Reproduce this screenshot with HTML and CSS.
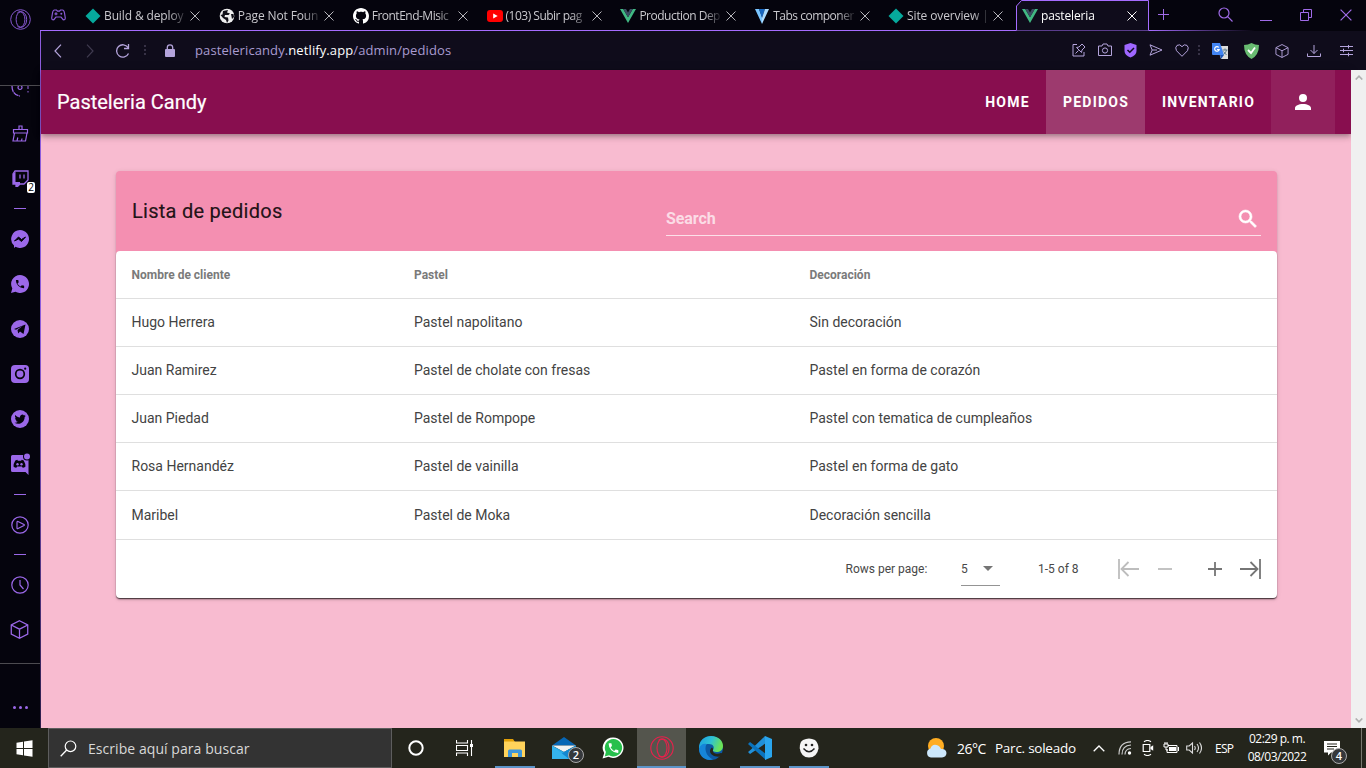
FILE: index.html
```html
<!DOCTYPE html>
<html lang="es">
<head>
<meta charset="utf-8">
<title>pasteleria</title>
<link rel="stylesheet" href="styles.css">
</head>
<body>
<svg class="defs" width="0" height="0">
  <defs>
    <symbol id="close" viewBox="0 0 10 10"><path d="M.5.5l9 9M9.500.500l-9 9" fill="none" stroke="currentColor"/></symbol>
    <symbol id="netlify" viewBox="0 0 16 16"><path d="M8 .5L15.500 8 8 15.500.5 8z" fill="#06a99c"/></symbol>
    <symbol id="vue" viewBox="0 0 16 14"><path d="M0 0h3.200L8 8.200 12.800 0H16L8 14z" fill="#41b883"/><path d="M3.200 0H6l2 3.400L10 0h2.800L8 8.200z" fill="#3b4d63"/></symbol>
    <symbol id="opera" viewBox="0 0 24 24"><g fill="none" stroke="currentColor" stroke-width="1.100"><circle cx="12" cy="12" r="11.200"/><ellipse cx="12" cy="12" rx="5" ry="8.800"/><path d="M8.500 4.300C12 1.200 19 3.500 19 12s-7 10.800-10.500 7.700"/></g></symbol>
    <symbol id="cube" viewBox="0 0 18 18"><path d="M9 .7l7.800 4v8.600L9 17.300l-7.800-4V4.700zM1.200 4.700L9 8.700l7.800-4M9 8.700v8.600" fill="none" stroke="currentColor" stroke-width="1.200"/></symbol>
    <symbol id="phone" viewBox="0 0 24 24"><path fill="currentColor" d="M6.620 10.790c1.440 2.830 3.760 5.150 6.590 6.590l2.200-2.200c.28-.28.67-.36 1.020-.25 1.120.37 2.320.57 3.570.57a1 1 0 0 1 1 1V20a1 1 0 0 1-1 1A17 17 0 0 1 3 4a1 1 0 0 1 1-1h3.500a1 1 0 0 1 1 1c0 1.250.2 2.450.57 3.570.11.35.03.74-.25 1.020z"/></symbol>
  </defs>
</svg>

<div class="desktop">
  <div class="browser">
    <aside class="sidebar">
      <div class="side-top"><svg width="21" height="21" class="opera-gx"><use href="#opera"/></svg></div>
      <div class="side-list">
        <div class="slot partial"><svg width="18" height="11" viewBox="0 0 18 11"><path d="M1 0c0 6 3 9.500 8 10" fill="none" stroke="currentColor" stroke-width="1.300" stroke-dasharray="6 .7"/><circle cx="9" cy="1.500" r="2" fill="none" stroke="currentColor" stroke-width="1.200"/><path d="M17 0v3M17 5v1.500" stroke="currentColor"/></svg></div>
        <div class="slot"><svg width="17" height="17" viewBox="0 0 17 17"><path d="M7 5V1h3v4M1.500 4.500h14V8h-14zM2.500 8L1 16h12.500L15 8M5 16l.8-3.500M9.500 16l.5-2.500" fill="none" stroke="currentColor" stroke-width="1.200"/></svg></div>
        <div class="slot badge-wrap"><svg width="17" height="17" viewBox="0 0 17 17"><path d="M3 1h13v9l-4 4H8l-2.500 2.500H4V14H1V4z" fill="none" stroke="currentColor" stroke-width="1.300"/><path d="M1 4l2.500-2.500V12H8v2l-3 2.500H4V14H1z" fill="currentColor"/><path d="M8 4.500v4M12 4.500v4" stroke="currentColor" stroke-width="1.300"/></svg><span class="side-badge">2</span></div>
        <div class="dash"></div>
        <div class="slot"><svg width="18" height="18" viewBox="0 0 18 18"><path d="M9 0a9 9 0 1 1-4.500 16.800L3 18v-2.500A9 9 0 0 1 9 0z" fill="currentColor"/><path d="M3.500 11l4-4 3 2.500 4-2.500-4 4.500-3-2.500z" fill="#05040d" stroke="#05040d"/></svg></div>
        <div class="slot"><svg width="18" height="18" viewBox="0 0 18 18"><path d="M9 0a9 9 0 1 1-4.500 16.800L0 18l1.300-4.500A9 9 0 0 1 9 0z" fill="currentColor"/><use href="#phone" x="3.500" y="3.500" width="11" height="11" color="#05040d"/></svg></div>
        <div class="slot"><svg width="18" height="18" viewBox="0 0 18 18"><circle cx="9" cy="9" r="9" fill="currentColor"/><path d="M3 9l11.500-4.500-2 9.500-3.500-2.500-1.800 2-.7-3.500 5-4-6.500 3.800z" fill="#05040d"/></svg></div>
        <div class="slot"><svg width="18" height="18" viewBox="0 0 18 18"><rect width="18" height="18" rx="4" fill="currentColor"/><circle cx="9" cy="9" r="4.300" fill="none" stroke="#05040d" stroke-width="1.700"/><circle cx="14.200" cy="3.700" r="1.100" fill="#05040d"/></svg></div>
        <div class="slot"><svg width="18" height="18" viewBox="0 0 18 18"><circle cx="9" cy="9" r="9" fill="currentColor"/><g transform="translate(3.500 3.600) scale(.47)"><path fill="#05040d" d="M23.953 4.570a10 10 0 01-2.825.775 4.958 4.958 0 002.163-2.723c-.951.555-2.005.959-3.127 1.184a4.920 4.920 0 00-8.384 4.482C7.690 8.095 4.067 6.130 1.640 3.162a4.822 4.822 0 00-.666 2.475c0 1.710.870 3.213 2.188 4.096a4.904 4.904 0 01-2.228-.616v.060a4.923 4.923 0 003.946 4.827 4.996 4.996 0 01-2.212.085 4.936 4.936 0 004.604 3.417 9.867 9.867 0 01-6.102 2.105c-.390 0-.779-.023-1.170-.067a13.995 13.995 0 007.557 2.209c9.053 0 13.998-7.496 13.998-13.985 0-.210 0-.420-.015-.630A9.935 9.935 0 0024 4.590z"/></g></svg></div>
        <div class="slot"><svg width="20" height="22" viewBox="0 0 20 22"><path d="M2.500 2h16v20l-3-3h-13a1.500 1.500 0 0 1-1.500-1.500v-14A1.500 1.500 0 0 1 2.500 2z" fill="currentColor"/><path d="M5.300 7.500l2-.7.6.9h3.200l.6-.9 2 .7q1.800 3 1.800 6-1.300 1.200-2.800 1.300l-.8-1.300H7.100l-.8 1.300q-1.500-.1-2.800-1.300 0-3 1.800-6z" fill="#05040d"/><circle cx="7.500" cy="11.300" r="1.200" fill="currentColor"/><circle cx="11.500" cy="11.300" r="1.200" fill="currentColor"/><circle cx="17" cy="3.500" r="4" fill="#05040d"/><circle cx="17" cy="3.500" r="3" fill="currentColor"/></svg></div>
        <div class="dash dash-tall"></div>
        <div class="slot shift"><svg width="18" height="18" viewBox="0 0 18 18"><circle cx="9" cy="9" r="8.200" fill="none" stroke="currentColor" stroke-width="1.200"/><path d="M6 6q0-.8 1-.5l6 3q.8.500 0 1l-6 3Q6 13 6 12z" fill="none" stroke="currentColor" stroke-width="1.200"/></svg></div>
        <div class="dash"></div>
        <div class="slot shift"><svg width="18" height="18" viewBox="0 0 18 18"><circle cx="9" cy="9" r="8.200" fill="none" stroke="currentColor" stroke-width="1.200"/><path d="M9 4v5l3.500 4" fill="none" stroke="currentColor" stroke-width="1.200"/></svg></div>
        <div class="slot shift"><svg width="19" height="19"><use href="#cube"/></svg></div>
      </div>
      <div class="side-more"><i></i><i></i><i></i></div>
    </aside>

    <div class="window">
      <div class="tabs">
        <div class="gamepad"><svg width="15" height="12" viewBox="0 0 15 12"><path d="M3.500 1h2l1 1.200h2L9.500 1h2q1.500 0 2 3l.8 5q0 1.800-1.300 1.800-1 0-1.700-1.200L10 8H5L3.700 9.600Q3 10.800 2 10.800.7 10.800.7 9l.8-5q.5-3 2-3zM3.500 4.800h3M5 3.300v3" fill="none" stroke="currentColor" stroke-width="1.200"/><circle cx="10.300" cy="4.800" r="1" fill="currentColor"/></svg></div>
        <div class="tab"><svg class="fav" width="16" height="16"><use href="#netlify"/></svg><span class="tab-text">Build &amp; deploy</span><svg class="x" width="10" height="10"><use href="#close"/></svg></div>
        <div class="tab"><svg class="fav" width="16" height="16" viewBox="0 0 16 16"><circle cx="8" cy="8" r="7.300" fill="#eee"/><path d="M4 3l5-1-1 2.500 3 1L9.500 7 6 7 5.500 9 9 9.500l.5 3L8 15l-1-3-3-2-2.500-3 2-.5zM12 6l2.500 0 .5 3-2 2z" fill="#111018"/></svg><span class="tab-text">Page Not Foun</span><svg class="x" width="10" height="10"><use href="#close"/></svg></div>
        <div class="tab"><svg class="fav" width="16" height="16" viewBox="0 0 16 16"><path fill="#fff" d="M8 0C3.580 0 0 3.580 0 8c0 3.540 2.290 6.530 5.470 7.590.4.070.55-.17.55-.38 0-.19-.01-.82-.01-1.490-2.010.37-2.530-.49-2.690-.94-.09-.23-.48-.94-.82-1.130-.28-.15-.68-.52-.01-.53.63-.01 1.080.58 1.230.82.72 1.210 1.870.87 2.330.66.070-.52.28-.87.51-1.070-1.780-.2-3.640-.89-3.640-3.950 0-.87.31-1.590.82-2.150-.08-.2-.36-1.020.08-2.120 0 0 .67-.21 2.200.82.64-.18 1.320-.27 2-.27s1.360.09 2 .27c1.530-1.040 2.200-.82 2.200-.82.44 1.100.16 1.920.08 2.120.51.56.82 1.270.82 2.150 0 3.070-1.870 3.750-3.650 3.950.29.25.54.73.54 1.480 0 1.070-.01 1.930-.01 2.200 0 .21.15.46.55.38A8.013 8.013 0 0016 8c0-4.420-3.580-8-8-8z"/></svg><span class="tab-text snug">FrontEnd-Misic</span><svg class="x" width="10" height="10"><use href="#close"/></svg></div>
        <div class="tab"><svg class="fav" width="16" height="16" viewBox="0 0 16 16"><rect y="2" width="16" height="12" rx="3" fill="#f00"/><path d="M6.200 5.500l4.500 2.500-4.500 2.500z" fill="#fff"/></svg><span class="tab-text snug">(103) Subir pag</span><svg class="x" width="10" height="10"><use href="#close"/></svg></div>
        <div class="tab"><svg class="fav" width="16" height="14"><use href="#vue"/></svg><span class="tab-text snug">Production Dep</span><svg class="x" width="10" height="10"><use href="#close"/></svg></div>
        <div class="tab"><svg class="fav" width="16" height="16" viewBox="0 0 16 16"><path d="M1 1h4l3 8v7z" fill="#7bc6ff"/><path d="M5 1h6L8 10z" fill="#1867c0"/><path d="M11 1h4L8 16V10z" fill="#aeddff"/></svg><span class="tab-text snug">Tabs componer</span><svg class="x" width="10" height="10"><use href="#close"/></svg></div>
        <div class="tab"><svg class="fav" width="16" height="16"><use href="#netlify"/></svg><span class="tab-text">Site overview |</span><svg class="x" width="10" height="10"><use href="#close"/></svg></div>
        <div class="tab active">
          <svg class="tab-shape" width="134" height="31" viewBox="0 0 134 31"><path d="M0 30.500V6L5.500.5H133v30z" fill="#0f0c1b"/><path d="M.5 30.500V6L5.500.5H132.500v30" fill="none" stroke="#a56cff"/></svg>
          <svg class="fav" width="16" height="14"><use href="#vue"/></svg><span class="tab-text">pasteleria</span><svg class="x" width="10" height="10"><use href="#close"/></svg>
        </div>
        <div class="caption">
          <svg width="12" height="12" viewBox="0 0 12 12"><path d="M5.500 0v11M0 5.500h11" stroke="currentColor"/></svg>
          <svg width="15" height="15" viewBox="0 0 15 15"><path d="M9.700 9.700L14.500 14.500M11 6a5 5 0 1 1-10 0 5 5 0 0 1 10 0z" fill="none" stroke="currentColor" stroke-width="1.200"/></svg>
          <svg width="12" height="12" viewBox="0 0 12 12"><path d="M0 11.500h12" stroke="currentColor"/></svg>
          <svg width="12" height="12" viewBox="0 0 12 12"><path d="M.5 3.500h8v8h-8zM3.500 3.500v-3h8v8h-3" fill="none" stroke="currentColor"/></svg>
          <svg width="12" height="12"><use href="#close"/></svg>
        </div>
      </div>

      <div class="address">
        <svg class="nav-back" width="8" height="14" viewBox="0 0 8 14"><path d="M7 .7L1 7l6 6.300" fill="none" stroke="currentColor" stroke-width="1.200"/></svg>
        <svg class="nav-fwd" width="8" height="14" viewBox="0 0 8 14"><path d="M1 .7L7 7l-6 6.300" fill="none" stroke="currentColor" stroke-width="1.200"/></svg>
        <svg class="nav-reload" width="14" height="14" viewBox="0 0 14 14"><path d="M12.500 9.500A6.200 6.200 0 1 1 12 3.500M12.500 0v4.500H8" fill="none" stroke="currentColor" stroke-width="1.300"/></svg>
        <span class="vdots d1"></span>
        <svg class="lock" width="10" height="13" viewBox="0 0 10 13"><rect y="5" width="10" height="8" rx="1" fill="currentColor"/><path d="M2.300 6V3.500a2.700 2.700 0 0 1 5.400 0V6" fill="none" stroke="currentColor" stroke-width="1.300"/></svg>
        <div class="url">pastelericandy.<b>netlify.app</b>/admin/pedidos</div>
        <div class="tools">
          <svg width="14" height="14" viewBox="0 0 14 14"><path d="M5 1.500H1v11.500h11V9M7 4l3-3 3 3-3 3-.5 2.500L4.500 4.500zM6.500 7.500L3.500 10.500" fill="none" stroke="currentColor"/></svg>
          <svg width="14" height="14" viewBox="0 0 14 14"><path d="M.5 3h3.500L5 1h4l1 2h3.500v9.500H.5z" fill="none" stroke="currentColor"/><circle cx="7" cy="7.500" r="2.600" fill="none" stroke="currentColor"/></svg>
          <svg width="13" height="15" viewBox="0 0 13 15"><path d="M6.500 0l6 2v6q0 4-6 6.500Q.5 12 .5 8V2z" fill="#9f67ff"/><path d="M3.500 7l2.300 2.300L10 5" fill="none" stroke="#0f0c1b" stroke-width="1.500"/></svg>
          <svg width="14" height="12" viewBox="0 0 14 12"><path d="M1 .8L13 6 1 11.200 3.200 6zM3.200 6H8" fill="none" stroke="currentColor"/></svg>
          <svg width="14" height="13" viewBox="0 0 14 13"><path d="M7 12.300L1.500 6.700Q-.3 3.500 2 1.400 5-.4 7 2.700 9-.4 12 1.400q2.300 2.100.5 5.300z" fill="none" stroke="currentColor"/></svg>
          <span class="vdots d2"></span>
          <svg width="16" height="16" viewBox="0 0 16 16"><path d="M5 3h11v13H9z" fill="#ddd"/><path d="M0 0h8l4 12H1q-1 0-1-1z" fill="#4285f4"/><path d="M8 12h4l-3 4z" fill="#1c55b5"/><path d="M6.800 4.500A2.300 2.300 0 1 0 7.200 6.500H5" fill="none" stroke="#fff" stroke-width="1.200"/><path d="M10.500 7h5M13 5.500V7M14.500 7q-.5 3-3 4.500M11.500 8.500l3 3.500" stroke="#607d8b" fill="none"/></svg>
          <svg width="15" height="16" viewBox="0 0 15 16"><path d="M7.500 0Q11 2 15 2q0 10-7.500 14Q0 12 0 2q4 0 7.500-2z" fill="#68bc71"/><path d="M4 7l3 3 4-5.500" fill="none" stroke="#fff" stroke-width="1.800"/></svg>
          <svg width="14" height="14"><use href="#cube"/></svg>
          <svg width="14" height="14" viewBox="0 0 14 14"><path d="M7 1v8.500M3.500 6L7 9.500 10.500 6M.5 9.500v3h13v-3" fill="none" stroke="currentColor"/></svg>
          <svg width="13" height="12" viewBox="0 0 13 12"><path d="M0 1.500h13M0 5.500h13M0 9.500h13M8.500 0v3.500M3.500 3.700v3.600M8.500 7.700v3.600" stroke="currentColor"/></svg>
        </div>
      </div>

      <div class="viewport">
        <div class="page">
          <header class="appbar">
            <h1>Pasteleria Candy</h1>
            <nav>
              <a class="nav-home">HOME</a><a class="nav-orders">PEDIDOS</a><a class="nav-stock">INVENTARIO</a>
              <a class="nav-user"><svg width="24" height="24" viewBox="0 0 24 24"><path fill="#fff" d="M12 4a4 4 0 1 1 0 8 4 4 0 0 1 0-8m0 10c4.420 0 8 1.790 8 4v2H4v-2c0-2.210 3.580-4 8-4z"/></svg></a>
            </nav>
          </header>
          <main class="card">
            <div class="card-head">
              <h2>Lista de pedidos</h2>
              <div class="search"><span>Search</span><svg width="24" height="24" viewBox="0 0 24 24"><path fill="#fff" stroke="#fff" stroke-width=".6" d="M9.500 3A6.500 6.500 0 0 1 16 9.500c0 1.610-.59 3.090-1.560 4.230l.27.27h.79l5 5-1.500 1.500-5-5v-.79l-.27-.27A6.516 6.516 0 0 1 9.500 16a6.500 6.500 0 0 1 0-13m0 2C7 5 5 7 5 9.500S7 14 9.500 14 14 12 14 9.500 12 5 9.500 5z"/></svg></div>
            </div>
            <div class="table">
              <div class="row head"><span>Nombre de cliente</span><span>Pastel</span><span>Decoración</span></div>
              <div class="row"><span>Hugo Herrera</span><span>Pastel napolitano</span><span>Sin decoración</span></div>
              <div class="row"><span>Juan Ramirez</span><span>Pastel de cholate con fresas</span><span>Pastel en forma de corazón</span></div>
              <div class="row"><span>Juan Piedad</span><span>Pastel de Rompope</span><span>Pastel con tematica de cumpleaños</span></div>
              <div class="row"><span>Rosa Hernandéz</span><span>Pastel de vainilla</span><span>Pastel en forma de gato</span></div>
              <div class="row last"><span>Maribel</span><span>Pastel de Moka</span><span>Decoración sencilla</span></div>
              <div class="pager">
                <span class="rpp">Rows per page:</span>
                <span class="select">5<i class="caret"></i></span>
                <span class="range">1-5 of 8</span>
                <svg class="p1 off" width="21" height="20" viewBox="0 0 21 20"><path d="M1 0v20M21 10H4M10.500 3L3.500 10l7 7" fill="none" stroke="currentColor" stroke-width="1.800"/></svg>
                <svg class="p2 off" width="14" height="14" viewBox="0 0 14 14"><path d="M0 7h14" stroke="currentColor" stroke-width="1.800"/></svg>
                <svg class="p3" width="14" height="14" viewBox="0 0 14 14"><path d="M0 7h14M7 0v14" stroke="currentColor" stroke-width="1.800"/></svg>
                <svg class="p4" width="21" height="20" viewBox="0 0 21 20"><path d="M20 0v20M0 10h17M10.500 3l7 7-7 7" fill="none" stroke="currentColor" stroke-width="1.800"/></svg>
              </div>
            </div>
          </main>
        </div>
        <div class="scrollbar">
          <svg width="8" height="5" viewBox="0 0 8 5"><path d="M.7 4.500L4 1.200l3.300 3.300" fill="none" stroke="#b0b0b0" stroke-width="1.700"/></svg>
          <svg width="8" height="5" viewBox="0 0 8 5"><path d="M.7.5L4 3.800 7.300.5" fill="none" stroke="#b0b0b0" stroke-width="1.700"/></svg>
        </div>
      </div>
    </div>
  </div>

  <footer class="taskbar">
    <div class="start"><svg width="17" height="17" viewBox="0 0 17 17"><path d="M.5 2.700l6.500-1V8H.5zM8 1.500L16.500.3V8H8zM.5 9H7v6.300l-6.500-1zM8 9h8.500v7.700L8 15.500z" fill="#fff"/></svg></div>
    <div class="tb-search"><svg width="17" height="17" viewBox="0 0 17 17"><circle cx="10.500" cy="6.300" r="5.300" fill="none" stroke="#fff" stroke-width="1.200"/><path d="M6.700 10L.7 16.200" stroke="#fff" stroke-width="1.300"/></svg><span>Escribe aquí para buscar</span></div>
    <div class="apps">
      <div class="app"><svg width="16" height="16" viewBox="0 0 16 16"><circle cx="8" cy="8" r="6.700" fill="none" stroke="#fff" stroke-width="2"/></svg></div>
      <div class="app"><svg width="17" height="16" viewBox="0 0 17 16"><path d="M.5 0v3h11V0M.5 16v-3h11v3M.5 5.500h11v5H.5zM15.500 0v16" fill="none" stroke="#fff" stroke-width="1.100"/><path d="M14 4h3v3h-3z" fill="#fff"/></svg></div>
      <div class="app open"><svg width="22" height="19" viewBox="0 0 22 19"><path d="M0 0h9l2 3H0z" fill="#e2a008"/><path d="M0 2.500h21V18H0z" fill="#ffd35b"/><path d="M4 18v-6q0-1.500 1.500-1.500h11Q18 10.500 18 12v6h-4v-4H8v4z" fill="#3f97da"/></svg></div>
      <div class="app mail"><svg width="24" height="23" viewBox="0 0 24 23"><path d="M0 8.500L12 0l12 8.500z" fill="#0766b5"/><path d="M0 8.500h24L12 15z" fill="#f2f2f2"/><path d="M0 8.500L12 15l12-6.500V22H0z" fill="#29abe8"/><path d="M12 15l12-6.500V22H2z" fill="#1488d0"/><path d="M0 8.500L17 22H0z" fill="#35b4ee"/></svg><span class="count">2</span></div>
      <div class="app"><svg width="22" height="22" viewBox="0 0 22 22"><path d="M11.500.5a10.200 10.200 0 1 1-5 19.200L.5 21.500 2.200 16A10.200 10.200 0 0 1 11.500.5z" fill="#fff"/><path d="M11.500 2a8.700 8.700 0 1 1-4.500 16.200L2.700 19.400 3.900 15A8.700 8.700 0 0 1 11.500 2z" fill="#27c04c"/><use href="#phone" x="5" y="4.500" width="13" height="13" color="#fff"/></svg></div>
      <div class="app open current"><svg width="24" height="24"><use href="#opera"/></svg></div>
      <div class="app"><svg width="24" height="24" viewBox="0 0 24 24"><defs><linearGradient id="eg" x1="0" y1="0" x2="1" y2=".3"><stop offset="0" stop-color="#1b9de2"/><stop offset=".55" stop-color="#2fc2d3"/><stop offset="1" stop-color="#6be357"/></linearGradient></defs><circle cx="12" cy="12" r="12" fill="#0c59a4"/><path d="M0 12C0 4 6 0 12 0c8 0 12 5.500 12 10 0 4-3 6-6.500 6-3 0-4-1.200-3.500-2 2-3 0-6-4-6-5 0-9 2-10 6z" fill="url(#eg)"/><path d="M0 13c1-4 4-6 7.500-5C5 13 7 20 14 23.500 6 25.500 0 20 0 13z" fill="#1685d9"/><path d="M14 14c-1 3 4 5 8 3l2 .5-1 2.500c-6 2-12-1-12-5 0-1.500 1-3 2-3.500q1.500 1 1 2.500z" fill="#24251c"/></svg></div>
      <div class="app open"><svg width="24" height="24" viewBox="0 0 24 24"><path d="M17 0L3 13.500 0 16l2 2L18 7z" fill="#2190d8"/><path d="M0 8l2-2 16 12v6z" fill="#0a73bd"/><path d="M17 0l7 3v18l-7 3z" fill="#2aa5ed"/></svg></div>
      <div class="app open"><svg width="20" height="20" viewBox="0 0 20 20"><path d="M4 2Q10-1 16 2q3.500 3 3.500 8.500Q18 19.500 10 19.500T.8 10.500Q.5 4 4 2z" fill="#f5f5f5"/><circle cx="7" cy="7" r="1.300" fill="#222"/><circle cx="13" cy="7" r="1.300" fill="#222"/><path d="M4.500 10.500q5.500 6.500 11 0" fill="none" stroke="#222" stroke-width="1.400"/></svg></div>
    </div>
    <div class="tray">
      <svg class="weather" width="21" height="20" viewBox="0 0 21 20"><circle cx="10" cy="8" r="8" fill="#ffad22"/><path d="M5 19.500a4.600 4.600 0 0 1-.5-9Q6 6 10.500 7q3 .5 4.500 4 5-.5 5.500 4-.2 4-4.500 4.500z" fill="#cde8fb"/></svg>
      <span class="temp">26°C</span><span class="sky">Parc. soleado</span>
      <svg class="t-up" width="12" height="7" viewBox="0 0 12 7"><path d="M.7 6.300L6 1l5.300 5.300" fill="none" stroke="#fff" stroke-width="1.300"/></svg>
      <svg class="t-wifi" width="14" height="14" viewBox="0 0 14 14"><path d="M1 13.500Q1 1 13 .8M4 13.500Q4 4.500 13 4M7 13.500Q7 8 13 7.500" fill="none" stroke="#ccc" stroke-width="1.200"/><circle cx="11.500" cy="12" r="1.700" fill="#fff"/></svg>
      <svg class="t-cam" width="12" height="16" viewBox="0 0 12 16"><path d="M2 1.800Q5.500-.8 9 1.800M2 14.200q3.500 2.600 7 0M1.200 4.500h6.600v7H1.200z" fill="none" stroke="#fff" stroke-width="1.200"/><path d="M8.500 7l2.700-1.800v5.600L8.500 9z" fill="#fff"/></svg>
      <svg class="t-bat" width="16" height="12" viewBox="0 0 16 12"><path d="M5 3.500h9v7H4V7M1 2h4v3H1zM2 0v2M4 0v2M3 5v3h2" fill="none" stroke="#fff"/><path d="M6 5h7v4H6zM15 5h1v4h-1z" fill="#fff"/></svg>
      <svg class="t-vol" width="16" height="14" viewBox="0 0 16 14"><path d="M.7 5h2.500L6.500 2v10L3.200 9H.7zM8.500 5q1.500 2 0 4M11 3q3 4 0 8M13.500 1.500q4 5.500 0 11" fill="none" stroke="#ddd" stroke-width="1.100"/></svg>
      <span class="lang">ESP</span>
      <span class="clock"><span>02:29 p. m.</span><span>08/03/2022</span></span>
      <div class="notif"><svg width="16" height="15" viewBox="0 0 16 15"><path d="M0 0h16v11.500H7L4 14.500v-3H0z" fill="#fff"/><path d="M3 3h10M3 5.500h10M3 8h7" stroke="#24251c"/></svg><span class="count">4</span></div>
      <i class="peek"></i>
    </div>
  </footer>
</div>
</body>
</html>
```
FILE: styles.css
```css
* { box-sizing: border-box; }
body { margin: 0; overflow: hidden; font-family: Roboto, "Liberation Sans", sans-serif; }
svg { display: block; flex: none; }
.defs { position: absolute; }
.desktop { width: 1366px; height: 768px; display: flex; flex-direction: column; background: #05040d; }
.browser { display: flex; height: 728px; }

/* Sidebar */
.sidebar { width: 40px; flex: none; display: flex; flex-direction: column; color: #9b68e8; background: #05040d; }
.side-top { height: 86px; padding-top: 9px; display: flex; justify-content: center; border-bottom: 1px solid #4c4b50; }
.opera-gx { color: #8a5bd6; }
.side-list { height: 578px; border-bottom: 1px solid #4c4b50; overflow: hidden; }
.slot { height: 45px; display: flex; align-items: center; justify-content: center; }
.shift { padding-right: 1px; height: 45px; }
.partial { height: 25px; align-items: flex-start; }
.badge-wrap { position: relative; }
.side-badge { position: absolute; left: 27px; top: 26px; width: 8px; height: 11px; border-radius: 2px; background: #fff; color: #000; font: 10px/11px "Open Sans", sans-serif; text-align: center; }
.dash { height: 15px; display: flex; align-items: center; justify-content: center; }
.dash::after { content: ""; width: 12px; height: 1px; background: #9b68e8; }
.dash-tall { height: 16px; padding-top: 1px; }
.side-more { flex: 1; display: flex; gap: 3px; justify-content: center; padding-top: 42px; }
.side-more i { width: 3px; height: 3px; border-radius: 50%; background: #9b68e8; }

/* Browser window */
.window { flex: 1; min-width: 0; display: flex; flex-direction: column; font-family: "Open Sans", "Noto Sans", sans-serif; }
.tabs { height: 31px; display: flex; color: #c9c8cd; background: linear-gradient(90deg, #a56cff 0 1110px, transparent 1215px) 0 30px / 100% 1px no-repeat; }
.gamepad { width: 39px; display: flex; justify-content: center; padding: 9px 2px 0 0; color: #8a5bd6; }
.tab { position: relative; width: 133.850px; flex: none; display: flex; align-items: center; padding: 0 12.500px 0 6px; }
.fav, .tab-text, .x { position: relative; }
.tab-text { flex: 1; min-width: 0; margin: 0 6px 0 3px; overflow: hidden; white-space: nowrap; font-size: 12px; line-height: 18px; letter-spacing: -.12px; -webkit-mask-image: linear-gradient(90deg, #000 65px, transparent 84px); mask-image: linear-gradient(90deg, #000 65px, transparent 84px); }
.snug { letter-spacing: -.5px; }
.x { color: #b6b5bb; }
.active { color: #fff; }
.active .x { color: #fff; }
.tab-shape { position: absolute; left: 0; top: 0; }
.caption { flex: 1; display: flex; align-items: flex-start; color: #a06be8; padding: 9px 0 0 8px; }
.caption svg:nth-child(2) { margin: -2px 0 0 48px; }
.caption svg:nth-child(3) { margin-left: 27px; }
.caption svg:nth-child(4) { margin-left: 28px; }
.caption svg:nth-child(5) { margin-left: 28px; }

.address { height: 39px; display: flex; align-items: center; background: #0f0c1b; color: #b4a4dc; border-left: 1px solid #8d5cdd; }
.nav-back { margin-left: 13px; }
.nav-fwd { margin-left: 24px; color: #403b50; }
.nav-reload { margin-left: 22px; }
.vdots { width: 2px; height: 11px; background: repeating-linear-gradient(#373246 0 2px, transparent 2px 4px); }
.d1 { margin-left: 14px; }
.lock { margin-left: 19px; }
.url { margin: -1px 0 0 20px; flex: 1; font-size: 13px; white-space: nowrap; color: #a99bd0; letter-spacing: .1px; }
.url b { font-weight: 400; color: #fff; }
.tools { display: flex; align-items: center; gap: 12px; padding-right: 13px; }
.tools .d2 { margin: 0 0 0 -3px; }
.tools svg:nth-child(n+8) { margin-left: 4px; }
.tools svg:nth-child(n+10) { margin-left: 6px; }
.tools svg:nth-child(n+11) { margin-left: 7px; }
.tools svg:nth-child(-n+5) { margin-top: -1px; }

/* Page */
.viewport { height: 658px; display: flex; border-left: 1px solid #8d5cdd; border-image: linear-gradient(#8d5cdd 40%, #2c1d49) 1; border-width: 0 0 0 1px; font-family: Roboto, sans-serif; }
.page { flex: 1; background: #f8bbd0; }
.scrollbar { width: 15px; background: #f0f0f0; display: flex; flex-direction: column; align-items: center; justify-content: space-between; padding: 5px 0; }
.appbar { height: 64px; background: #880e4f; color: #fff; display: flex; justify-content: space-between; padding: 0 16px; box-shadow: 0 2px 4px -1px rgba(0,0,0,.2), 0 4px 5px rgba(0,0,0,.14), 0 1px 10px rgba(0,0,0,.12); }
.appbar h1 { margin: 0; font-size: 20px; line-height: 64px; font-weight: 400; -webkit-text-stroke: .2px #fff; }
.appbar nav { display: flex; }
.appbar a { display: flex; align-items: center; justify-content: center; font-size: 14px; font-weight: 700; letter-spacing: 1.250px; }
.nav-home { width: 77px; }
.appbar .nav-orders { width: 99px; background: #9d3a6e; padding-left: 1px; }
.appbar .nav-stock { width: 126px; padding-left: 1px; }
.nav-user { width: 64px; background: #91205c; }

.card { margin: 37px 74px 0 75px; height: 427px; border-radius: 4px; background: #f48fb1; box-shadow: 0 3px 1px -2px rgba(0,0,0,.2), 0 2px 2px rgba(0,0,0,.14), 0 1px 5px rgba(0,0,0,.12); }
.card-head { height: 80px; padding: 0 16px; display: flex; justify-content: space-between; }
.card h2 { margin: 24px 0 0; font-size: 20px; line-height: 32px; font-weight: 400; letter-spacing: .27px; color: rgba(0,0,0,.87); -webkit-text-stroke: .2px rgba(0,0,0,.87); }
.search { width: 595px; height: 33px; margin-top: 32px; border-bottom: 1px solid rgba(255,255,255,.72); display: flex; justify-content: space-between; padding-right: 1px; color: rgba(255,255,255,.7); font-size: 16px; font-weight: 700; line-height: 31px; letter-spacing: -.08px; }
.search svg { margin-top: 4px; }
.table { height: 347px; background: #fff; border-radius: 4px; box-shadow: 0 1px 1px rgba(0,0,0,.55); color: rgba(0,0,0,.87); }
.row { height: 48px; display: grid; grid-template-columns: 282.500px 395.500px 1fr; align-items: center; border-bottom: 1px solid #dfdfdf; padding-bottom: 1px; font-size: 14px; font-weight: 400; color: #434343; }
.row span { padding-left: 15.500px; }
.head { padding-bottom: 0; font-size: 12px; font-weight: 700; color: #7a7a7a; }
.last { height: 49px; padding-bottom: 0; }
.pager { height: 58px; display: flex; align-items: center; font-size: 12px; color: #484848; }
.rpp { margin-left: 729.500px; width: 115.500px; }
.select { width: 39px; height: 33px; border-bottom: 1px solid #949494; display: flex; align-items: center; gap: 15px; }
.caret { border: 5px solid transparent; border-top-color: #757575; border-bottom: 0; }
.range { margin-left: 38px; width: 80px; }
.pager svg { color: #757575; }
.pager svg.off { color: #bdbdbd; }
.pager .p2 { margin-left: 18.500px; }
.pager .p3 { margin-left: 36px; }
.pager .p4 { margin-left: 18.500px; }

/* Taskbar */
.taskbar { height: 40px; display: flex; background: #24251c; color: #fff; font-family: "Open Sans", "Noto Sans", sans-serif; }
.start { width: 48px; display: flex; align-items: center; justify-content: center; }
.tb-search { width: 344px; border: 1px solid #5d5d5d; background: #333; display: flex; align-items: center; padding-left: 11px; gap: 11px; font-size: 14px; letter-spacing: .06px; color: #d8d8d8; }
.apps { display: flex; }
.app { position: relative; width: 49px; display: flex; align-items: center; justify-content: center; }
.app:nth-child(1) { padding-right: 1px; }
.app:nth-child(2) { padding-right: 3px; }
.open::after { content: ""; position: absolute; left: 5px; right: 4px; bottom: 0; height: 2px; background: #5c94c8; }
.current { background: #54554d; color: #e6214c; }
.current::after { left: 0; right: 0; }
.count { position: absolute; width: 16px; height: 16px; border: 1px solid #aaa; border-radius: 50%; background: #35383b; font-size: 11px; font-weight: 600; line-height: 14px; text-align: center; }
.mail .count { left: 29px; top: 19px; }
.tray { margin-left: auto; width: 440px; display: flex; align-items: center; font-size: 14px; }
.temp { margin-left: 10px; width: 38px; letter-spacing: -.5px; }
.sky { width: 83px; letter-spacing: -.25px; white-space: nowrap; font-size: 13.500px; }
.t-up { margin-left: 15px; }
.t-wifi { margin-left: 13px; }
.t-cam { margin-left: 10px; }
.t-bat { margin-left: 9px; }
.t-vol { margin-left: 7px; }
.lang { margin-left: 13px; width: 32px; font-size: 12px; letter-spacing: -.7px; }
.clock { width: 60px; display: flex; flex-direction: column; align-items: center; font-size: 12px; line-height: 18px; letter-spacing: -.5px; white-space: nowrap; }
.notif { position: relative; margin-left: 17px; width: 37px; }
.notif .count { left: 7px; top: 7px; }
.peek { width: 1px; height: 40px; background: #77786f; }
```
